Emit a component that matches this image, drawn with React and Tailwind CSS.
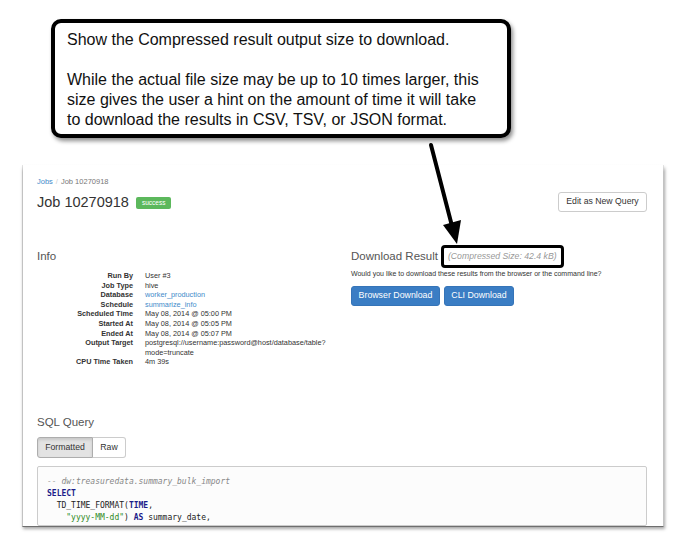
export default function App() {
  const rows = [
    ["Run By", "User #3"],
    ["Job Type", "hive"],
    ["Database", <span className="text-[#428bca]">worker_production</span>],
    ["Schedule", <span className="text-[#428bca]">summarize_info</span>],
    ["Scheduled Time", "May 08, 2014 @ 05:00 PM"],
    ["Started At", "May 08, 2014 @ 05:05 PM"],
    ["Ended At", "May 08, 2014 @ 05:07 PM"],
    [
      "Output Target",
      <span>
        postgresql://username:password@host/database/table?
        <br />
        mode=truncate
      </span>,
    ],
    ["CPU Time Taken", "4m 39s"],
  ];

  return (
    <div className="relative w-[683px] h-[547px] bg-white overflow-hidden font-['Liberation_Sans',Arial,sans-serif] text-[#333]">
      <div className="pt-[165px] pl-[22px]">
        <div className="w-[642px] h-[362px] overflow-hidden bg-white border-x border-x-[#c2c2c2] border-b border-b-[#6e6e6e] shadow-[1px_2px_3px_rgba(0,0,0,0.35)] pl-[14px] pr-[16px] pt-[12px] flex flex-col">
          {/* breadcrumb */}
          <div className="text-[7.5px] leading-[10px] flex items-center">
            <span className="text-[#428bca]">Jobs</span>
            <span className="text-[#ccc] px-[3px]">/</span>
            <span className="text-[#777]">Job 10270918</span>
          </div>

          {/* heading row */}
          <div className="mt-[5px] flex justify-between items-start">
            <div className="flex items-center h-[20px]">
              <span className="text-[14.5px] leading-[20px] text-[#333]">Job 10270918</span>
              <span className="ml-[7px] mt-[1px] bg-[#5cb85c] text-white text-[6.5px] leading-[12px] h-[12px] px-[6px] rounded-[2px]">
                success
              </span>
            </div>
            <div className="h-[20px] w-[89px] border border-[#ccc] rounded-[3px] bg-white flex items-center justify-center text-[8.7px] text-[#333]">
              Edit as New Query
            </div>
          </div>

          {/* two columns */}
          <div className="mt-[33px] grid grid-cols-2 gap-x-[18px]">
            <div className="flex flex-col">
              <div className="h-[23px] flex items-center text-[11.5px] text-[#555]">Info</div>
              <div className="mt-[3px] grid grid-cols-[96px_1fr] gap-x-[12px] text-[7.3px] leading-[9.6px]">
                {rows.map(([k, v], i) => (
                  <div key={i} className="contents">
                    <div className="text-right font-bold text-[#333]">{k}</div>
                    <div className="text-[#333]">{v}</div>
                  </div>
                ))}
              </div>
            </div>
            <div className="flex flex-col">
              <div className="h-[23px] flex items-center">
                <span className="text-[11.5px] text-[#555]">Download Result</span>
                <span className="ml-[3px] h-[23px] border-[3px] border-black rounded-[4px] px-[4px] flex items-center italic text-[8.7px] text-[#999]">
                  (Compressed Size: 42.4 kB)
                </span>
              </div>
              <div className="mt-[1px] text-[7px] leading-[10px] text-[#333]">
                Would you like to download these results from the browser or the command line?
              </div>
              <div className="mt-[7px] flex gap-[4px]">
                <div className="h-[20px] w-[89px] rounded-[3px] bg-[#3a7dc4] border border-[#3574b8] text-white text-[8.8px] flex items-center justify-center">
                  Browser Download
                </div>
                <div className="h-[20px] w-[70px] rounded-[3px] bg-[#3a7dc4] border border-[#3574b8] text-white text-[8.8px] flex items-center justify-center">
                  CLI Download
                </div>
              </div>
            </div>
          </div>

          {/* SQL Query */}
          <div className="mt-[48px] text-[11.5px] leading-[14px] text-[#555]">SQL Query</div>
          <div className="mt-[8px] flex">
            <div className="h-[21px] w-[56px] border border-[#adadad] bg-[#e3e3e3] shadow-[inset_0_2px_3px_rgba(0,0,0,0.12)] rounded-l-[3px] text-[8.7px] flex items-center justify-center text-[#333]">
              Formatted
            </div>
            <div className="h-[21px] w-[33px] border border-l-0 border-[#ccc] bg-white rounded-r-[3px] text-[8.7px] flex items-center justify-center text-[#333]">
              Raw
            </div>
          </div>
          <div className="mt-[8px] border border-[#ccc] bg-[#fcfcfc] rounded-[2px] pl-[9px] pt-[9px] h-[120px] font-['DejaVu_Sans_Mono',monospace] text-[8px] leading-[12px] whitespace-pre">
            <div className="italic text-[#888]">-- dw:treasuredata.summary_bulk_import</div>
            <div className="font-bold text-[#1c1c8a]">SELECT</div>
            <div className="text-[#222]">
              {"  TD_TIME_FORMAT("}
              <span className="font-bold text-[#1c1c8a]">TIME</span>
              {","}
            </div>
            <div className="text-[#222]">
              {"    "}
              <span className="text-[#2f8a1f]">"yyyy-MM-dd"</span>
              {") "}
              <span className="font-bold text-[#1c1c8a]">AS</span>
              {" summary_date,"}
            </div>
          </div>
        </div>
      </div>

      {/* fade at the top of the screenshot card */}
      <div className="absolute left-[16px] top-[160px] w-[656px] h-[12px] bg-gradient-to-b from-white to-transparent" />

      {/* callout */}
      <div className="absolute left-[51px] top-[19px] w-[460px] h-[119px] border-[4px] border-black rounded-[10px] bg-white shadow-[2px_3px_4px_rgba(0,0,0,0.45)] pl-[12px] pt-[7px] text-[16px] leading-[20px] text-[#111]">
        <div>Show the Compressed result output size to download.</div>
        <div className="h-[20px]" />
        <div>While the actual file size may be up to 10 times larger, this</div>
        <div>size gives the user a hint on the amount of time it will take</div>
        <div>to download the results in CSV, TSV, or JSON format.</div>
      </div>

      {/* arrow */}
      <svg className="absolute left-0 top-0" width="683" height="547" viewBox="0 0 683 547">
        <line x1="431" y1="145" x2="452" y2="226" stroke="#000" strokeWidth="4" strokeLinecap="round" />
        <polygon points="443,225 461,220 457,244" fill="#000" />
      </svg>
    </div>
  );
}
